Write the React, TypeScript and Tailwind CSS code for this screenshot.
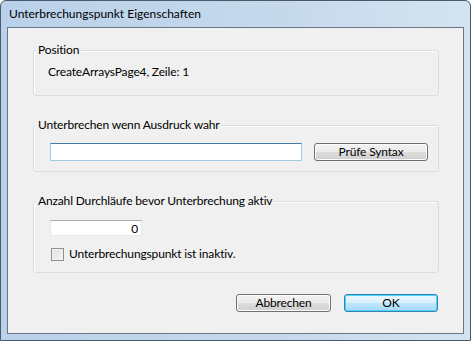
const font = { fontFamily: 'Lato, "Noto Sans", "Segoe UI", Arial, sans-serif' }

function GroupBox({ title, height, children }: { title: string; height: string; children?: React.ReactNode }) {
  return (
    <div className={`flex flex-col rounded-[3px] border border-[#d5dfe5] shadow-[inset_1px_1px_0_#ffffff] ${height}`}>
      <div className="-mt-[8px] ml-[2px] self-start bg-[#f0f0f0] px-[2px] leading-[14px]">{title}</div>
      {children}
    </div>
  )
}

function Button({ label, primary, width }: { label: string; primary?: boolean; width: string }) {
  return (
    <button
      className={`h-[18px] ${width} rounded-[3px] border leading-[14px] text-black ${
        primary
          ? 'border-[#3c7fb1] bg-[linear-gradient(#eaf6fd_0%,#d9f0fc_50%,#bee6fd_50%,#a7d9f5_100%)] shadow-[inset_0_0_0_1px_#48d7fb]'
          : 'border-[#707070] bg-[linear-gradient(#f2f2f2_0%,#ebebeb_50%,#dddddd_50%,#cfcfcf_100%)] shadow-[inset_0_0_0_1px_#fcfcfc]'
      }`}
    >
      {label}
    </button>
  )
}

export default function App() {
  return (
    <div
      style={font}
      className="flex h-[341px] w-[471px] flex-col rounded-t-[6px] border border-[#4a5a6a] bg-[linear-gradient(90deg,#b9d1ea_0%,#c6d9ec_60%,#d4e3f1_100%)] text-[12px] tracking-[-0.15px] text-black"
    >
      <div className="flex h-[26px] items-center pl-[8px] text-[12px] leading-[14px] tracking-normal">
        Unterbrechungspunkt Eigenschaften
      </div>
      <div className="mx-[6px] mb-[6px] flex flex-1 flex-col border border-[#6b7785] bg-[#f0f0f0] px-[25px] pr-[24px]">
        <div className="mt-[22px]">
          <GroupBox title="Position" height="h-[46px]">
            <div className="mt-[8px] ml-[14px] leading-[14px]">CreateArraysPage4, Zeile: 1</div>
          </GroupBox>
        </div>

        <div className="mt-[29px]">
          <GroupBox title="Unterbrechen wenn Ausdruck wahr" height="h-[47px]">
            <div className="mt-[11px] ml-[16px] flex gap-[12px]">
              <input
                type="text"
                className="h-[18px] w-[252px] border border-[#a4c9e3] border-t-[#3d7bad] bg-white px-1 outline-none"
              />
              <Button label="Prüfe Syntax" width="w-[114px]" />
            </div>
          </GroupBox>
        </div>

        <div className="mt-[29px]">
          <GroupBox title="Anzahl Durchläufe bevor Unterbrechung aktiv" height="h-[72px]">
            <input
              type="text"
              readOnly
              value="0"
              className="mt-[12px] ml-[16px] h-[16px] w-[92px] border border-[#e3e9ef] border-t-[#abadb3] bg-white px-[3px] text-right leading-[14px] outline-none"
            />
            <label className="mt-[11px] ml-[17px] flex items-center gap-[5px] leading-[14px]">
              <span className="h-[13px] w-[13px] border border-[#8e8f8f] bg-[linear-gradient(135deg,#dcdcdc,#f7f7f7)] shadow-[inset_0_0_0_1px_#f4f4f4]" />
              Unterbrechungspunkt ist inaktiv.
            </label>
          </GroupBox>
        </div>

        <div className="mt-[21px] flex justify-end gap-[13px] pr-[1px]">
          <Button label="Abbrechen" width="w-[95px]" />
          <Button label="OK" primary width="w-[94px]" />
        </div>
      </div>
    </div>
  )
}
